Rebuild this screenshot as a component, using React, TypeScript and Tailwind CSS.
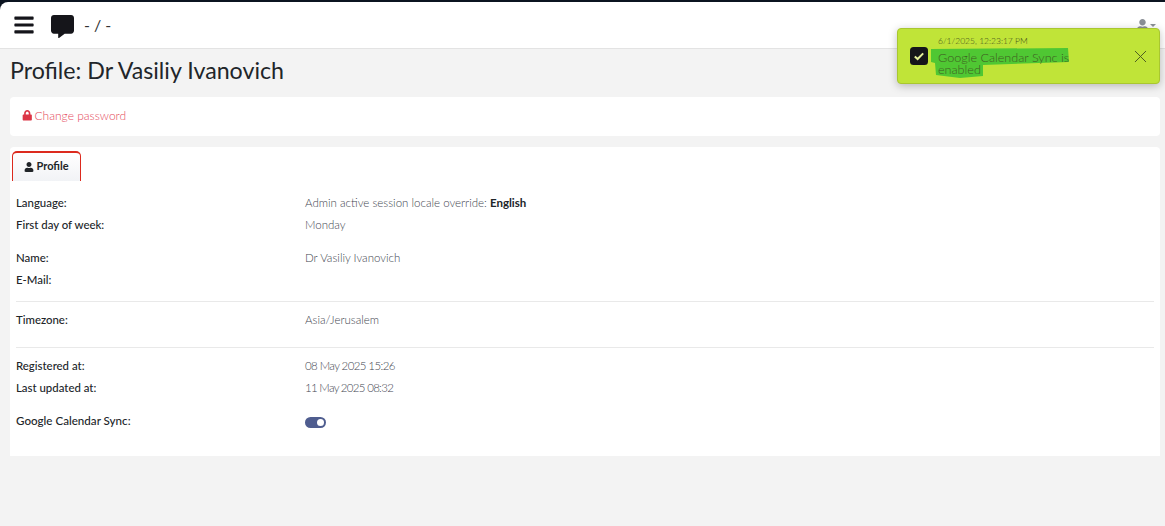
import React from 'react';
import { FaBars, FaCommentAlt, FaLock, FaUser } from 'react-icons/fa';
import { X } from 'lucide-react';

const Row = ({ label, children, className = '', valueClass = '' }: { label: string; children?: React.ReactNode; className?: string; valueClass?: string }) => (
  <div className={`flex h-[22px] items-center ${className}`}>
    <div className="w-[289px] text-[11.4px] font-medium text-[#212529]">{label}</div>
    <div className={`text-[11.5px] font-light text-[#3f4650] ${valueClass}`}>{children}</div>
  </div>
);

const Toast = () => (
  <div className="absolute left-[897px] top-[28px] flex h-[56px] w-[263px] rounded-[4px] border border-[#a9c72f] bg-[#c0e438] shadow-[0_2px_8px_rgba(0,0,0,0.25)]">
    <div className="flex w-[40px] items-center justify-center pl-[1px]">
      <svg width="18" height="18" viewBox="0 0 18 18" className="mt-[-1px]">
        <rect width="18" height="18" rx="3.5" fill="#15151a" />
        <path d="M4.8 9.4 L7.6 12 L13.2 6.4" fill="none" stroke="#e4ef9a" strokeWidth="2" />
      </svg>
    </div>
    <div className="relative flex-1 pt-[6px]">
      <div className="text-[8.5px] leading-[12px] font-light text-[#3d4a1a]">6/1/2025, 12:23:17 PM</div>
      <svg className="absolute left-[-7px] top-[19px]" width="140" height="31" viewBox="0 0 140 31">
        <path d="M0 1 L137 0 L138 14 L52 17 L52 28 L29 30 L5 27 L4 15 L0 14 Z" fill="#4fc733" />
      </svg>
      <div className="relative mt-[5px] w-[150px] text-[12.6px] leading-[12px] font-light text-[#3f5a22]">Google Calendar Sync is enabled</div>
    </div>
    <div className="flex w-[40px] items-center justify-center">
      <X size={21} strokeWidth={1.1} className="ml-[2px] text-[#4a5a20]" />
    </div>
  </div>
);

export default function App() {
  return (
    <div className="relative h-[526px] w-[1165px] overflow-hidden bg-[#f3f3f3] font-['Lato',sans-serif] text-[#212529]">
      <div className="bg-[#0b1420] pt-[2px]">
        <div className="flex h-[47px] items-center rounded-tl-[8px] border-b border-[#e3e3e3] bg-white">
          <FaBars className="ml-[13px] text-[22px] text-[#15151a]" />
          <FaCommentAlt className="ml-[16px] mt-[2px] text-[23px] text-[#15151a]" />
          <div className="ml-[10px] text-[16px] font-normal text-[#333]">- / -</div>
          <div className="ml-auto mr-[9px] flex items-center gap-[1px] text-[#8a8f96]">
            <FaUser className="text-[13px]" />
            <div className="h-0 w-0 border-x-[3px] border-t-[3px] border-x-transparent border-t-[#8a8f96]" />
          </div>
        </div>
      </div>

      <h1 className="ml-[10px] mt-[6px] h-[42px] text-[23.2px] leading-[30px] font-normal text-[#212529]">Profile: Dr Vasiliy Ivanovich</h1>

      <div className="ml-[10px] flex h-[39px] w-[1150px] items-center rounded-[4px] bg-white pb-[2px] pl-[12px] text-[12px] font-light text-[#e5475a]">
        <FaLock className="mr-[2px] text-[10.5px] text-[#dc3545]" />
        Change password
      </div>

      <div className="ml-[10px] mt-[11px] h-[309px] w-[1150px] rounded-t-[4px] bg-white pt-[4px]">
        <div className="ml-[2px] flex h-[30px] w-[69px] items-center justify-center gap-[2px] rounded-t-[5px] border-x border-t-2 border-[#dc2a1e] bg-gradient-to-b from-white to-[#f1f3f6] pb-[1px] text-[11px] font-bold text-[#212529]">
          <FaUser className="text-[10px]" />
          Profile
        </div>

        <div className="mt-[11px] px-[6px]">
          <Row label="Language:">
            Admin active session locale override: <b className="font-bold text-[#212529]">English</b>
          </Row>
          <Row label="First day of week:">Monday</Row>
          <Row label="Name:" className="mt-[11px]">Dr Vasiliy Ivanovich</Row>
          <Row label="E-Mail:" />
          <hr className="mt-[10px] border-[#e9e9e9]" />
          <Row label="Timezone:" className="mt-[7px]">Asia/Jerusalem</Row>
          <hr className="mt-[16px] border-[#e9e9e9]" />
          <Row label="Registered at:" className="mt-[7px]" valueClass="tracking-[-0.6px]">08 May 2025 15:26</Row>
          <Row label="Last updated at:" valueClass="tracking-[-0.7px]">11 May 2025 08:32</Row>
          <div className="mt-[11px] flex h-[22px] items-center">
            <div className="w-[289px] text-[11.6px] font-medium text-[#212529]">Google Calendar Sync:</div>
            <div className="mt-[2px] flex h-[11px] w-[21px] items-center justify-end rounded-full bg-[#4f5d8f] pr-[2px]">
              <div className="h-[7px] w-[7px] rounded-full bg-white" />
            </div>
          </div>
        </div>
      </div>

      <Toast />
    </div>
  );
}
